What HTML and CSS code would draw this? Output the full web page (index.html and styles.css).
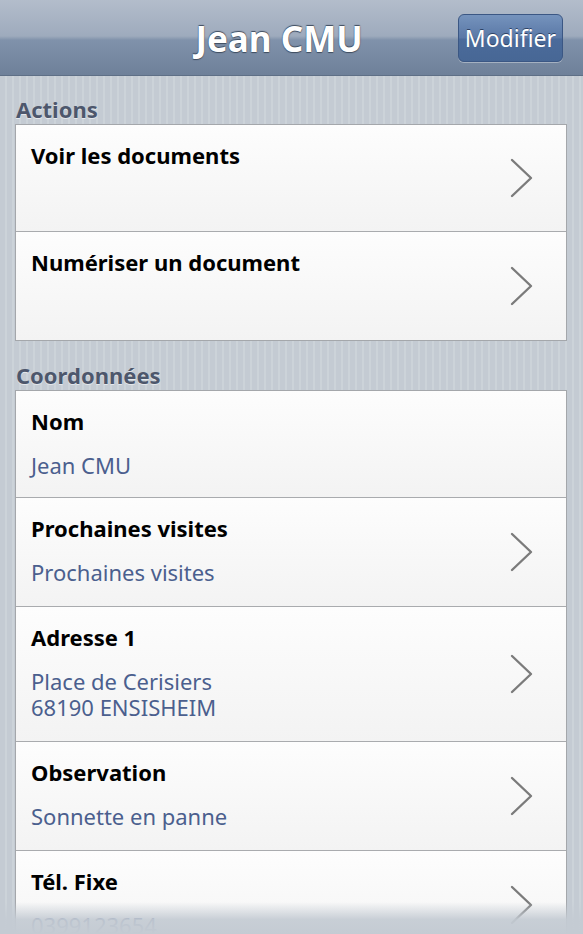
FILE: index.html
```html
<!DOCTYPE html>
<html>
<head>
    <meta charset="UTF-8">
    <meta name="viewport" content="width=device-width, initial-scale=1, maximum-scale=1">
    <title>Jean CMU</title>
    <link rel="stylesheet" href="styles.css">
</head>
<body>
<div class="toolbar">
    <h1 class="toolbar_title">Jean CMU</h1>
    <span class="toolbar_btn">Modifier</span>
</div>

<div class="page">
    <p class="group_title">Actions</p>
    <ul class="group">
        <li class="row">
            <div class="row_text">
                <p class="row_title">Voir les documents</p>
            </div>
            <svg class="chevron" width="26" height="40" viewBox="0 0 26 40"><polyline points="3,2 22,20 3,38" fill="none" stroke="#7b7b7b" stroke-width="2.4" stroke-linecap="round" stroke-linejoin="round"/></svg>
        </li>
        <li class="row">
            <div class="row_text">
                <p class="row_title">Numériser un document</p>
            </div>
            <svg class="chevron" width="26" height="40" viewBox="0 0 26 40"><polyline points="3,2 22,20 3,38" fill="none" stroke="#7b7b7b" stroke-width="2.4" stroke-linecap="round" stroke-linejoin="round"/></svg>
        </li>
    </ul>

    <p class="group_title second">Coordonnées</p>
    <ul class="group">
        <li class="row">
            <div class="row_text">
                <p class="row_title">Nom</p>
                <p class="row_value">Jean CMU</p>
            </div>
        </li>
        <li class="row">
            <div class="row_text">
                <p class="row_title">Prochaines visites</p>
                <p class="row_value">Prochaines visites</p>
            </div>
            <svg class="chevron" width="26" height="40" viewBox="0 0 26 40"><polyline points="3,2 22,20 3,38" fill="none" stroke="#7b7b7b" stroke-width="2.4" stroke-linecap="round" stroke-linejoin="round"/></svg>
        </li>
        <li class="row tall">
            <div class="row_text">
                <p class="row_title">Adresse 1</p>
                <p class="row_value">Place de Cerisiers<br>68190 ENSISHEIM</p>
            </div>
            <svg class="chevron" width="26" height="40" viewBox="0 0 26 40"><polyline points="3,2 22,20 3,38" fill="none" stroke="#7b7b7b" stroke-width="2.4" stroke-linecap="round" stroke-linejoin="round"/></svg>
        </li>
        <li class="row">
            <div class="row_text">
                <p class="row_title">Observation</p>
                <p class="row_value">Sonnette en panne</p>
            </div>
            <svg class="chevron" width="26" height="40" viewBox="0 0 26 40"><polyline points="3,2 22,20 3,38" fill="none" stroke="#7b7b7b" stroke-width="2.4" stroke-linecap="round" stroke-linejoin="round"/></svg>
        </li>
        <li class="row">
            <div class="row_text">
                <p class="row_title">Tél. Fixe</p>
                <p class="row_value">0399123654</p>
            </div>
            <svg class="chevron" width="26" height="40" viewBox="0 0 26 40"><polyline points="3,2 22,20 3,38" fill="none" stroke="#7b7b7b" stroke-width="2.4" stroke-linecap="round" stroke-linejoin="round"/></svg>
        </li>
    </ul>
</div>
<div class="bottom_fade"></div>
</body>
</html>
```

FILE: styles.css
```css
html, body {
    margin: 0;
    padding: 0;
    height: 934px;
    overflow: hidden;
}
body {
    font-family: "Noto Sans", "Open Sans", sans-serif;
    background: repeating-linear-gradient(90deg, #c4cbd3 0, #c4cbd3 5px, #ccd3d9 5px, #ccd3d9 7px);
    position: relative;
}
p, ul, li, h1 {
    margin: 0;
    padding: 0;
}

/* top bar */
.toolbar {
    height: 76px;
    display: flex;
    align-items: center;
    justify-content: center;
    position: relative;
    background: linear-gradient(#b3bdcb 0, #9eabbd 36px, #8092ab 40px, #6e8099 76px);
    border-bottom: 1px solid #5e6f86;
    box-sizing: border-box;
}
.toolbar_title {
    font-size: 35px;
    font-weight: bold;
    color: #fff;
    text-shadow: 0 -1px 1px #3d4b5e, 0 1px 1px #3d4b5e;
    margin-left: -25px;
    padding-top: 2px;
}
.toolbar_btn {
    position: absolute;
    right: 20px;
    top: 14px;
    height: 48px;
    padding: 0 6px;
    box-sizing: border-box;
    display: flex;
    align-items: center;
    font-size: 23px;
    color: #fff;
    border: 1px solid #3b5784;
    border-radius: 6px;
    background: linear-gradient(#7593bd, #5a78a6 50%, #4b6b9b 52%, #476795);
    box-shadow: 0 1px 0 rgba(255,255,255,0.35);
    text-shadow: 0 -1px 0 #2e4366;
}

/* groups */
.page {
    padding: 20px 16px 0 15px;
}
.group_title {
    font-size: 22px;
    line-height: 26px;
    font-weight: bold;
    color: #4d576c;
    text-shadow: 0 1px 0 #e4e8ec;
    padding-left: 1px;
    margin-bottom: 2px;
}
.group_title.second {
    margin-top: 21px;
}
.group {
    list-style: none;
    border: 1px solid #a4a7ab;
    background: #f7f7f7;
}
.row {
    display: flex;
    align-items: center;
    padding: 0 31px 0 15px;
    height: 109px;
    box-sizing: border-box;
    border-top: 1px solid #a9abae;
    background: linear-gradient(#fdfdfd, #f3f3f3);
}
.row:first-child {
    border-top: none;
    height: 106px;
}
.row.tall {
    height: 135px;
}
.row_text {
    flex: 1;
    align-self: flex-start;
    padding-top: 16px;
}
.row_title {
    font-size: 22px;
    line-height: 28px;
    font-weight: bold;
    color: #000;
}
.row_value {
    margin-top: 17px;
    font-size: 22px;
    line-height: 26px;
    color: #4b5f8e;
}
.chevron {
    display: block;
    flex: none;
}

.bottom_fade {
    position: absolute;
    left: 0;
    right: 0;
    bottom: 0;
    height: 32px;
    background: linear-gradient(rgba(196,203,211,0), rgba(196,203,211,0.92) 55%, #c4cbd3);
}
```
